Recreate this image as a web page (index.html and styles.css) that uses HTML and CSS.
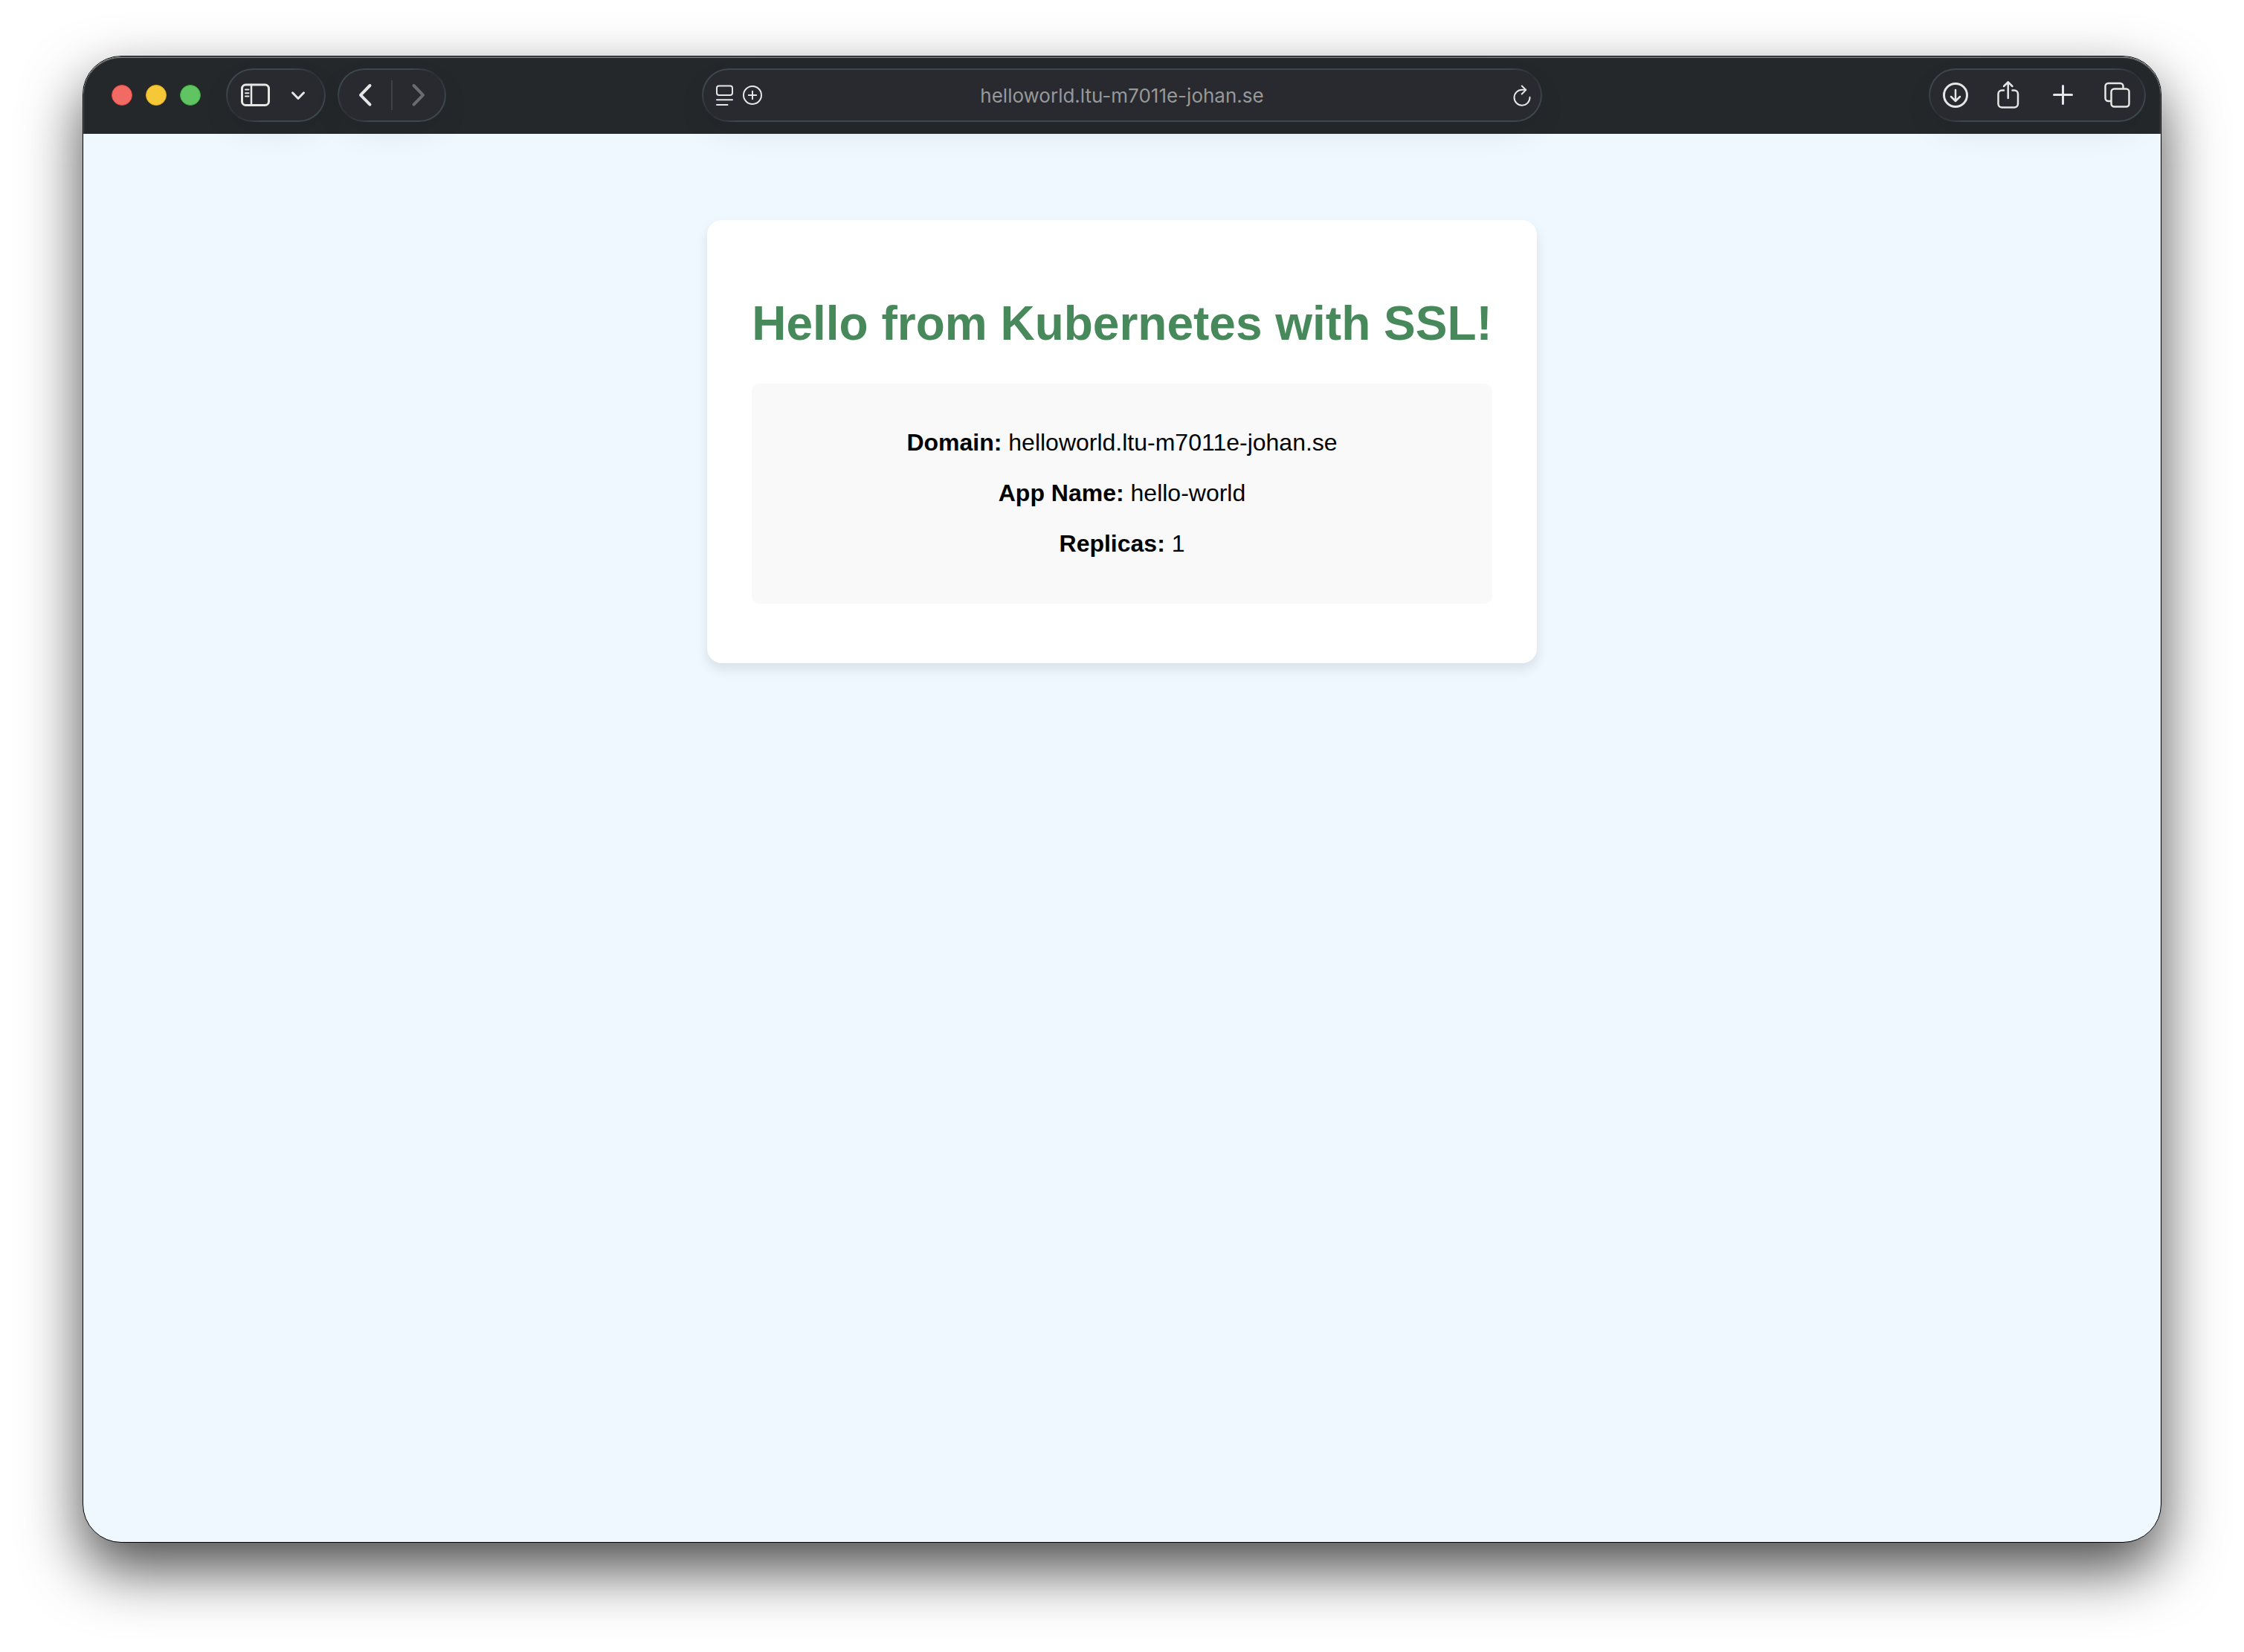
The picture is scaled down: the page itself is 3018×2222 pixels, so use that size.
FILE: index.html
```html
<!DOCTYPE html>
<html lang="en">
<head>
<meta charset="utf-8">
<title>Hello World</title>
<link rel="stylesheet" href="styles.css">
</head>
<body>
<div class="window">
  <header class="toolbar">
    <div class="toolbar-start">
      <div class="lights">
        <button class="light light-close" aria-label="Close"></button>
        <button class="light light-minimize" aria-label="Minimize"></button>
        <button class="light light-zoom" aria-label="Zoom"></button>
      </div>
      <div class="pill sidebar-pill">
        <button class="tool" aria-label="Show sidebar">
          <svg width="76" height="68" viewBox="0 0 76 68"><rect x="19.5" y="20" width="36" height="27.5" rx="5"/><path d="M32 20v27.5" stroke-width="2.5"/><path d="M24 26.5h4.5M24 31.2h4.5M24 35.6h4.5" stroke-width="2"/></svg>
        </button>
        <button class="tool" aria-label="Tab groups">
          <svg width="38" height="68" viewBox="0 0 38 68"><path d="M11.5 30.8l7.5 7.7 7.5-7.7"/></svg>
        </button>
      </div>
      <div class="pill">
        <button class="tool" aria-label="Back">
          <svg class="bold" width="70" height="68" viewBox="0 0 70 68"><path d="M41.5 21L29 33.8l12.5 12.8"/></svg>
        </button>
        <span class="divider"></span>
        <button class="tool tool-off" aria-label="Forward" disabled>
          <svg class="bold" width="70" height="68" viewBox="0 0 70 68"><path d="M28.5 21L41 33.8l-12.5 12.8"/></svg>
        </button>
      </div>
    </div>
    <div class="pill address">
      <div class="address-tools">
        <button class="tool" aria-label="Page menu">
          <svg class="thin" width="46" height="68" viewBox="0 0 46 68"><rect x="18" y="21.5" width="21" height="12.5" rx="3"/><path d="M18 40.3h21M18 47h14.5"/></svg>
        </button>
        <button class="tool" aria-label="Add page">
          <svg class="thin" width="40" height="68" viewBox="0 0 40 68"><circle cx="20" cy="34" r="12"/><path d="M14.8 34h10.4M20 28.8v10.4"/></svg>
        </button>
      </div>
      <input class="url" type="text" aria-label="Address" value="helloworld.ltu-m7011e-johan.se">
      <div class="address-tools address-end">
        <button class="tool" aria-label="Reload">
          <svg class="thin" width="50" height="68" viewBox="0 0 50 68"><path d="M35.5 36.8A10.5 10.5 0 1 1 25 26.7h5"/><path d="M24.7 21.6l5.6 5.3-5.6 5.6"/></svg>
        </button>
      </div>
    </div>
    <div class="toolbar-end">
      <div class="pill">
        <button class="tool" aria-label="Downloads">
          <svg width="72" height="68" viewBox="0 0 72 68"><circle cx="34" cy="34" r="15.5"/><path d="M34 27v14.5M28 36l6 6 6-6" stroke-width="2.5"/></svg>
        </button>
        <button class="tool" aria-label="Share">
          <svg width="72" height="68" viewBox="0 0 72 68"><path d="M27 27.5h-2.5a5 5 0 0 0-5 5v13a5 5 0 0 0 5 5h16.5a5 5 0 0 0 5-5v-13a5 5 0 0 0-5-5h-2.500" stroke-width="2.5"/><path d="M32.700 16.800v21.200M27 22l5.700-5.700 5.700 5.700" stroke-width="2.5"/></svg>
        </button>
        <button class="tool" aria-label="New tab">
          <svg width="72" height="68" viewBox="0 0 72 68"><path d="M22.500 33.500h24M34.500 21.500v24"/></svg>
        </button>
        <button class="tool" aria-label="Tab overview">
          <svg width="72" height="68" viewBox="0 0 72 68"><rect x="27.500" y="25.500" width="24" height="24" rx="4" stroke-width="2.5"/><path d="M26.500 42h-3a4 4 0 0 1-4-4V22a4 4 0 0 1 4-4h16a4 4 0 0 1 4 4v2.500" stroke-width="2.5"/></svg>
        </button>
      </div>
    </div>
  </header>
  <main class="page">
    <section class="card">
      <h1>Hello from Kubernetes with SSL!</h1>
      <div class="info">
        <p><strong>Domain:</strong> helloworld.ltu-m7011e-johan.se</p>
        <p><strong>App Name:</strong> hello-world</p>
        <p><strong>Replicas:</strong> 1</p>
      </div>
    </section>
  </main>
</div>
</body>
</html>
```

FILE: styles.css
```css
* {
  box-sizing: border-box;
}

body {
  display: flex;
  min-height: 100vh;
  margin: 0;
  padding: 75px 111px 147px;
  background: #fff;
  font-family: Arial, "Liberation Sans", sans-serif;
}

button {
  margin: 0;
  padding: 0;
  border: 0;
  background: none;
}

.window {
  display: flex;
  flex: 1;
  flex-direction: column;
  min-width: 0;
  overflow: hidden;
  border: 1px solid #000;
  border-radius: 52px;
  background: #f0f8ff;
  box-shadow: 0 36px 80px rgba(0, 0, 0, 0.7);
}

/* Toolbar */

.toolbar {
  display: grid;
  grid-template-columns: minmax(0, 1fr) minmax(0, 1130px) minmax(0, 1fr);
  align-items: center;
  height: 104px;
  padding: 0 19px 2px;
  border: 1px solid #555858;
  border-top: 2px solid #6b6f6f;
  border-bottom: 0;
  border-radius: 51px 51px 0 0;
  background: #25282b;
}

.toolbar-start,
.toolbar-end {
  display: flex;
  align-items: center;
}

.toolbar-start {
  gap: 16px;
}

.toolbar-end {
  justify-content: flex-end;
}

.lights {
  display: flex;
  gap: 18px;
  margin: 0 18px;
}

.light {
  width: 28px;
  height: 28px;
  border: 1px solid;
  border-radius: 50%;
}

.light-close {
  border-color: #e2463f;
  background: #f16a64;
}

.light-minimize {
  border-color: #e0ac1c;
  background: #f6c736;
}

.light-zoom {
  border-color: #35a936;
  background: #61c463;
}

.pill {
  display: flex;
  height: 72px;
  border: 2px solid transparent;
  border-radius: 36px;
  background:
    linear-gradient(#282a2f, #282a2f) padding-box,
    radial-gradient(circle at calc(100% - 12px) 10px, #2c3035, transparent 36px) border-box,
    radial-gradient(circle at 12px calc(100% - 10px), #2c3035, transparent 36px) border-box,
    linear-gradient(#3c474e, #3c474e) border-box;
  box-shadow: 0 16px 40px rgba(0, 0, 0, 0.06);
}

.sidebar-pill {
  padding-right: 16px;
}

.divider {
  width: 2px;
  height: 40px;
  margin: 14px 0;
  background: #3e4045;
}

.tool {
  display: block;
  color: #e6e6e6;
}

.tool-off {
  color: #6a6b6f;
}

.tool svg {
  display: block;
  fill: none;
  stroke: currentColor;
  stroke-width: 3;
  stroke-linecap: round;
  stroke-linejoin: round;
}

.tool .thin {
  stroke-width: 2;
}

.tool .bold {
  stroke-width: 4;
}

.address {
  display: grid;
  grid-template-columns: 86px minmax(0, 1fr) 86px;
}

.address-tools {
  display: flex;
}

.address-end {
  justify-content: flex-end;
}

.url {
  width: 100%;
  padding: 2px 0 0;
  border: 0;
  outline: 0;
  background: none;
  color: #97989a;
  font: 26px/32px Inter, "Noto Sans", sans-serif;
  text-align: center;
}

/* Page */

.page {
  display: flex;
  flex: 1;
  align-items: flex-start;
  justify-content: center;
  padding: 116px 40px;
}

.card {
  padding: 60px 60px 80px;
  border-radius: 20px;
  background: #fff;
  box-shadow: 0 8px 16px rgba(0, 0, 0, 0.1);
  color: #000;
  text-align: center;
}

h1 {
  margin: 42px 0 44px;
  color: #47895a;
  font-size: 64px;
  line-height: 74px;
}

.info {
  padding: 29px 30px 31px;
  border-radius: 10px;
  background: #f9f9f9;
  font-size: 32px;
  line-height: 36px;
}

.info p {
  margin: 32px 0;
}
```
